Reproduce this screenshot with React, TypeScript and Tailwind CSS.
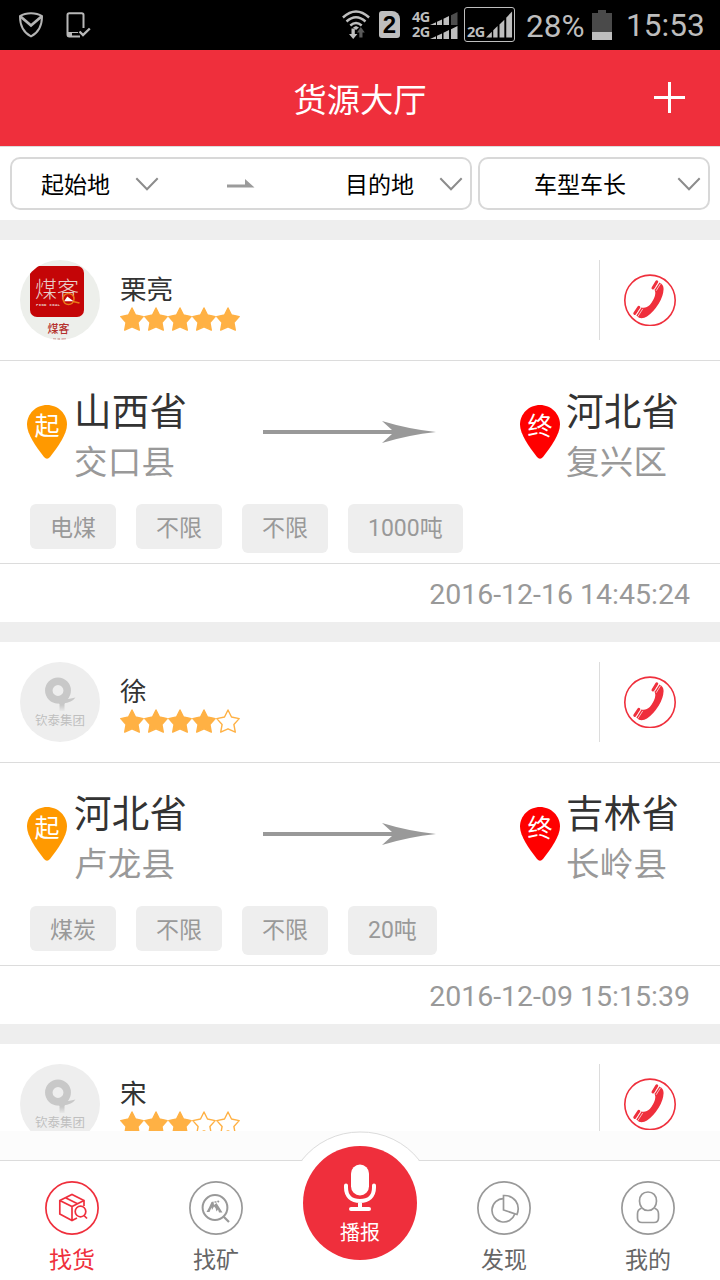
import type { ReactNode } from "react";

type Place = { province: string; county: string };

type Route = { from: Place; to: Place; tags: string[]; time: string };

type Cargo = {
  id: number;
  name: string;
  stars: number;
  avatar: "meike" | "default";
  route?: Route;
};

const cargos: Cargo[] = [
  {
    id: 1,
    name: "栗亮",
    stars: 5,
    avatar: "meike",
    route: {
      from: { province: "山西省", county: "交口县" },
      to: { province: "河北省", county: "复兴区" },
      tags: ["电煤", "不限", "不限", "1000吨"],
      time: "2016-12-16 14:45:24",
    },
  },
  {
    id: 2,
    name: "徐",
    stars: 4,
    avatar: "default",
    route: {
      from: { province: "河北省", county: "卢龙县" },
      to: { province: "吉林省", county: "长岭县" },
      tags: ["煤炭", "不限", "不限", "20吨"],
      time: "2016-12-09 15:15:39",
    },
  },
  { id: 3, name: "宋", stars: 3, avatar: "default" },
];

function SignalBars({ dimLast = false }: { dimLast?: boolean }) {
  return (
    <svg className="shrink-0" width="28" height="13" viewBox="0 0 28 13" fill="#bebebe">
      <path d="M0 13L6 10.2V13Z" />
      <path d="M7 13V9.7L12 7.4V13Z" />
      <path d="M13.5 13V6.7L19 4.1V13Z" />
      <path d="M21 13V3.2L27.5 0V13Z" fill={dimLast ? "#4d4d4d" : "#bebebe"} />
    </svg>
  );
}

function StatusBar() {
  return (
    <div className="flex h-[50px] shrink-0 items-center bg-black text-[#bdbdbd]">
      <svg className="ml-[18px]" width="26" height="28" viewBox="0 0 26 28" fill="none" stroke="#b4b4b4" strokeWidth="2">
        <path d="M13 2.2C9 2.2 5 3.2 2 5.2C2 14 5.5 21.5 13 25.3C20.5 21.5 24 14 24 5.2C21 3.2 17 2.2 13 2.2Z" />
        <path d="M2.5 5.5L13 14.5L23.5 5.5" strokeWidth="2.8" />
      </svg>
      <svg className="ml-[21px]" width="28" height="28" viewBox="0 0 28 28" fill="none" stroke="#b8b8b8" strokeWidth="2">
        <path d="M18.5 17V4Q18.5 2.2 16.7 2.2H4.3Q2.5 2.2 2.5 4V23.2Q2.5 25.5 4.3 25.5H15" />
        <path d="M3 23H7" strokeWidth="4" />
        <path d="M7 21.5H13" strokeWidth="1" />
        <path d="M14.5 20.5L18 24L24.8 17.5" strokeWidth="2.4" />
      </svg>

      <svg className="ml-[249px]" width="28" height="30" viewBox="0 0 28 30" fill="none" stroke="#bebebe" strokeWidth="2.4">
        <path d="M0.9 7.5Q14 -4.6 27.1 7.5" />
        <path d="M4.5 11.5Q14 3 23.5 11.5" />
        <path d="M8.3 15.5Q14 10.4 19.7 15.5" />
        <path d="M11 17.5L14 20L17 17.5L14 16Z" fill="#bebebe" stroke="none" />
        <path d="M9.5 18.5V24H7L11.2 29L15.4 24H12.8V18.5Z" fill="#bebebe" stroke="none" />
        <path d="M17.3 27.5V22.5H15L18.8 17L22.8 22.5H20.5V27.5Z" fill="#5a5a5a" stroke="none" />
      </svg>
      <div className="mb-px ml-[9px] flex h-[27px] w-[21px] items-center justify-center rounded-[3px] rounded-tr-[8px] bg-[#bebebe] font-['Liberation_Sans'] text-[24px] font-bold leading-none text-black">
        2
      </div>
      <div className="ml-3 flex w-[46px] flex-col font-['Open_Sans'] text-[14.5px] font-bold leading-[14px] tracking-[-0.6px]">
        <div className="flex h-[14px] items-end">
          <span className="mb-px w-[19px]">4G</span>
          <SignalBars dimLast />
        </div>
        <div className="flex h-[14px] items-end">
          <span className="w-[19px]">2G</span>
          <SignalBars />
        </div>
      </div>
      <div className="mb-px ml-[6px] flex h-[35px] w-[51px] items-end rounded-[3px] border border-[#bebebe] pb-[3px] pl-[2px]">
        <span className="w-[19px] font-['Open_Sans'] text-[14.5px] font-bold leading-[13px] tracking-[-0.6px]">2G</span>
        <svg className="shrink-0" width="27" height="27" viewBox="0 0 28 27" fill="#bebebe">
          <path d="M0 27L6 21V27Z" />
          <path d="M7.5 27V19.5L12 15V27Z" />
          <path d="M14 27V13.5L19 8.5V27Z" />
          <path d="M21 27V6.5L27 0V27Z" />
        </svg>
      </div>
      <span className="ml-[11px] mt-[3px] w-[66px] text-[31.5px] leading-none">28%</span>
      <svg className="mb-px" width="20" height="30" viewBox="0 0 20 30">
        <path d="M0 3H6V0H14V3H20V22H0Z" fill="#4a4a4a" />
        <rect y="22" width="20" height="8" fill="#bebebe" />
      </svg>
      <span className="ml-[14px] mt-[2px] text-[31.6px] leading-none">15:53</span>
    </div>
  );
}

function Chevron() {
  return (
    <svg width="24" height="14" viewBox="0 0 24 14" fill="none" stroke="#8c8c8c" strokeWidth="2">
      <path d="M1.3 1.3L12 12.3L22.7 1.3" />
    </svg>
  );
}

function FilterBar() {
  return (
    <div className="flex h-[74px] shrink-0 gap-1.5 border-t border-[#dcdcdc] bg-white px-2.5 pt-2.5 text-[23px] text-black">
      <div className="flex h-[53px] w-[462px] items-center rounded-[10px] border-2 border-[#d8d8d8] pl-[29px] pr-[7px]">
        <span className="mt-[5px]">起始地</span>
        <span className="ml-[25px]">
          <Chevron />
        </span>
        <svg className="ml-[68px]" width="28" height="10" viewBox="0 0 28 10" fill="#9b9b9b">
          <path d="M0 5.5H18V0L27.5 8.5H0Z" />
        </svg>
        <span className="ml-auto mr-[25px] mt-[5px]">目的地</span>
        <Chevron />
      </div>
      <div className="flex h-[53px] w-[232px] items-center rounded-[10px] border-2 border-[#d8d8d8] pl-[54px] pr-[7px]">
        <span className="mt-[5px]">车型车长</span>
        <span className="ml-auto">
          <Chevron />
        </span>
      </div>
    </div>
  );
}

function Star({ filled }: { filled: boolean }) {
  return (
    <svg width="24" height="24" viewBox="0 0 24 24" strokeWidth="1.4" strokeLinejoin="round" stroke="#ffb144" fill={filled ? "#ffb144" : "none"}>
      <path d="M12 1L15.5 8L23.2 9.6L17.9 15.5L19.3 23.1L12 19.8L4.7 23.1L6.1 15.5L0.8 9.6L8.5 8Z" />
    </svg>
  );
}

function Avatar({ kind }: { kind: Cargo["avatar"] }) {
  if (kind === "meike") {
    return (
      <div className="flex h-20 w-20 flex-col items-center overflow-hidden rounded-full bg-[#edefeb] pt-1.5">
        <div className="relative mr-1.5 h-[51px] w-[54px] shrink-0 rounded-[7px] bg-[#c40507] pt-[11px] text-center text-[22px] font-light leading-[26px] text-[#e8cfc9]">
          煤客
          <svg className="absolute left-[31px] top-[26px]" width="20" height="14" viewBox="0 0 20 14" fill="none" stroke="#e87a18" strokeWidth="1.4">
            <circle cx="7.5" cy="7" r="5.5" fill="#c40507" />
            <path d="M12 9.5L18.5 11" />
            <path d="M4.5 8.5L6.5 5.5L8.5 7L10.5 8.5Z" fill="#fff" stroke="#fff" />
          </svg>
          <span className="absolute left-[6px] top-[37px] whitespace-nowrap font-['Liberation_Mono'] text-[4px] font-bold leading-[4px] tracking-[0.3px]">
            FIND COAL
          </span>
        </div>
        <span className="mr-[3px] mt-[6px] text-[11px] font-medium leading-[14px] text-[#b5322e]">煤客</span>
        <svg className="mt-px" width="16" height="2" viewBox="0 0 16 2" stroke="#c77a74">
          <path d="M1 1H4M5.5 1H8M9.5 1H14" />
        </svg>
      </div>
    );
  }
  return (
    <div className="flex h-20 w-20 flex-col items-center rounded-full bg-[#eeeeee] pt-[15px]">
      <svg width="32" height="34" viewBox="0 0 32 34">
        <defs>
          <linearGradient id="stem" x1="0" y1="0" x2="0" y2="1">
            <stop offset="0.5" stopColor="#c8c8c8" />
            <stop offset="1" stopColor="#e8e8e8" />
          </linearGradient>
        </defs>
        <path d="M12 22H23L20.5 27V34H15.5V27Z" fill="url(#stem)" />
        <circle cx="14" cy="13.5" r="9.2" fill="none" stroke="#c8c8c8" strokeWidth="7.5" />
        <path d="M12 21.5Q22 23.5 31.5 20.5Q28 25.5 19 26.5L10 26Z" fill="#c8c8c8" />
      </svg>
      <span className="mt-[2px] text-[12.5px] leading-[16px] text-[#bfbfbf]">钦泰集团</span>
    </div>
  );
}

function PhoneIcon() {
  return (
    <svg width="52" height="52" viewBox="0 0 52 52">
      <circle cx="26" cy="26.3" r="25.2" fill="none" stroke="#ef2f3c" strokeWidth="1.6" />
      <path
        d="M35.2 8.5Q39.6 10 39.6 15Q39.3 22 34.8 29.5Q29.5 38 23 42.5Q19 45 15 43.8L12.3 41.5L17 33.5Q18 34 20 33.8Q24.5 33.5 27.5 28.8Q31 23.5 31.3 19.5Q31.3 17.5 30.5 15.5Z"
        fill="#ef2f3c"
      />
      <g stroke="#ef2f3c" strokeWidth="3" strokeLinecap="round">
        <path d="M29 14L32.8 7.8" />
        <path d="M10.8 39.4L14.8 33.3" />
      </g>
      <g stroke="#fff" strokeWidth="0.7">
        <path d="M30.6 15.5L35.2 8.2" />
        <path d="M32.1 16.8L36.6 9.6" />
        <path d="M12.2 41.2L17 33.8" />
        <path d="M13.8 42.6L18.8 34.8" />
      </g>
    </svg>
  );
}

function Pin({ label, color }: { label: string; color: string }) {
  return (
    <div className="relative mt-[19px] h-[54px] w-10 shrink-0">
      <svg width="40" height="54" viewBox="0 0 40 54" fill={color}>
        <path d="M20 0C9 0 0 8.8 0 19.5C0 29 9 42 17 52Q20 55.5 23 52C31 42 40 29 40 19.5C40 8.8 31 0 20 0Z" />
      </svg>
      <span className="absolute inset-x-0 top-[8px] text-center text-[25px] leading-[28px] text-white">{label}</span>
    </div>
  );
}

function PlaceName({ place }: { place: Place }) {
  return (
    <div className="whitespace-nowrap pt-px">
      <p className="text-[37.5px] leading-[50px] tracking-[0.3px] text-[#333333]">{place.province}</p>
      <p className="text-[33.5px] leading-[52px] tracking-[0.3px] text-[#999999]">{place.county}</p>
    </div>
  );
}

function RouteInfo({ route }: { route: Route }) {
  return (
    <>
      <div className="h-[203px] border-b border-[#dcdcdc] pt-[25px]">
        <div className="flex h-[100px] pl-[27px]">
          <Pin label="起" color="#ff9900" />
          <div className="ml-[7px] w-[189px]">
            <PlaceName place={route.from} />
          </div>
          <svg className="mt-[35px]" width="173" height="22" viewBox="0 0 173 22" fill="#999999">
            <path d="M0 9H129L119 0Q145 8 173 11Q145 14 119 22L129 13H0Z" />
          </svg>
          <div className="ml-[84px]">
            <Pin label="终" color="#ff0000" />
          </div>
          <div className="ml-[6px]">
            <PlaceName place={route.to} />
          </div>
        </div>
        <div className="mt-[18px] flex items-start gap-5 pl-[30px] text-[23px] text-[#999999]">
          {route.tags.map((tag, i) => (
            <span key={i} className={`rounded-md bg-[#eeeeee] px-5 leading-[49px] ${i > 1 ? "h-[49px]" : "h-[45px]"}`}>
              {tag}
            </span>
          ))}
        </div>
      </div>
      <p className="pr-[30px] text-right text-[28.5px] leading-[62px] text-[#999999]">{route.time}</p>
    </>
  );
}

function CargoCard({ cargo }: { cargo: Cargo }) {
  return (
    <section className="mb-5 h-[382px] shrink-0 bg-white">
      <div className="flex h-[121px] border-b border-[#dcdcdc] py-5 pl-5">
        <Avatar kind={cargo.avatar} />
        <div className="ml-5 pt-[13px]">
          <p className="text-[26.6px] leading-[34px] text-[#333333]">{cargo.name}</p>
          <div className="flex">
            {[1, 2, 3, 4, 5].map((n) => (
              <Star key={n} filled={n <= cargo.stars} />
            ))}
          </div>
        </div>
        <div className="ml-auto flex h-20 w-[121px] items-center border-l border-[#dcdcdc] pl-6">
          <PhoneIcon />
        </div>
      </div>
      {cargo.route && <RouteInfo route={cargo.route} />}
    </section>
  );
}

function TabItem({ label, active = false, children }: { label: string; active?: boolean; children: ReactNode }) {
  return (
    <div className={`flex flex-1 flex-col items-center pt-5 ${active ? "text-[#ef2f3c]" : "text-[#666666]"}`}>
      <svg width="54" height="54" viewBox="0 0 54 54" fill="none" stroke={active ? "#ef2f3c" : "#999999"} strokeWidth="1.7">
        <circle cx="27" cy="27" r="26.1" />
        {children}
      </svg>
      <span className="mt-[9px] text-[23px] leading-[34px]">{label}</span>
    </div>
  );
}

function TabBar() {
  return (
    <nav className="relative flex h-[120px] shrink-0 border-t border-[#dcdcdc] bg-white">
      <TabItem label="找货" active>
        <path d="M39 25V19.5L27 13.5L14.8 19.5V33L27 39.5L32 37M14.8 19.5L27 25.5L39 19.5M27 25.5V39.5M20.5 16.8L32.5 22.8" />
        <circle cx="35.5" cy="30.5" r="5.3" />
        <path d="M39 34.5L42 37.5" />
      </TabItem>
      <TabItem label="找矿">
        <circle cx="26" cy="26.5" r="12.4" strokeWidth="2" />
        <path d="M34.5 35.5L40 41" strokeWidth="2.2" />
        <path
          d="M17.5 31L20 26.5L22.5 21L24.5 20.5L25 24L27.5 22L33.5 31.5H30L29 28.5L27.5 30.5L26.5 27L25 25.5L23 29L22.5 26.5L20.5 31Z"
          fill="#999999"
          stroke="none"
        />
        <path d="M25.5 21H27.5M28.5 20L30 21" />
      </TabItem>
      <div className="flex-1" />
      <TabItem label="发现">
        <path d="M26.5 14.5V29L40 33.5C44 23 37 14 26.5 14.5Z" />
        <path d="M26.5 17.6A11.7 11.7 0 1 0 37.8 33" />
      </TabItem>
      <TabItem label="我的">
        <path d="M27 11C32 11 35.5 14.5 35.5 20C35.5 25.5 32 29.5 27 29.5C22 29.5 18.5 25.5 18.5 20C18.5 14.5 22 11 27 11Z" />
        <path d="M20.5 27.3C18 28 16.5 30 16.5 33V37Q16.5 41.5 21 41.5H33Q37.5 41.5 37.5 37V33C37.5 30 36 28 33.5 27.3" />
      </TabItem>

      {/* raised broadcast button */}
      <div className="absolute -top-[30px] left-1/2 h-[145px] w-[120px] -translate-x-1/2">
        <svg width="120" height="145" viewBox="0 0 120 145" fill="none">
          <path d="M1.5 30.5A74 74 0 0 1 60 1A74 74 0 0 1 119.5 30.5V40H1.5Z" fill="#fff" />
          <path d="M1.5 29.5A74 74 0 0 1 60 1A74 74 0 0 1 119.5 29.5" stroke="#dcdcdc" />
          <circle cx="60" cy="72" r="57" fill="#ef2f3c" />
          <rect x="51" y="33.5" width="18" height="31" rx="9" fill="#fff" />
          <path d="M46 54.5V56.5C46 65 51.5 70 60 70C68.5 70 74 65 74 56.5V54.5M60 70V77M51 78H69" stroke="#fff" strokeWidth="4" strokeLinecap="round" />
        </svg>
        <span className="absolute inset-x-0 top-[88px] text-center text-[20px] leading-[28px] text-white">播报</span>
      </div>
    </nav>
  );
}

export default function App() {
  return (
    <div className="flex h-[1280px] w-[720px] flex-col overflow-hidden bg-[#fcfcfc] font-[Roboto,'Noto_Sans_CJK_SC',sans-serif]">
      <StatusBar />
      <header className="relative flex h-24 shrink-0 items-center justify-center bg-[#ef2f3c] pt-[6px] text-[33.3px] text-white">
        <h1>货源大厅</h1>
        <svg className="absolute right-[35px] top-8" width="31" height="31" viewBox="0 0 31 31" stroke="#fff" strokeWidth="3">
          <path d="M0 15.5H31M15.5 0V31" />
        </svg>
      </header>
      <FilterBar />
      <main className="mb-[29px] flex min-h-0 flex-1 flex-col overflow-hidden bg-[#eeeeee] pt-5">
        {cargos.map((cargo) => (
          <CargoCard key={cargo.id} cargo={cargo} />
        ))}
      </main>
      <TabBar />
    </div>
  );
}
